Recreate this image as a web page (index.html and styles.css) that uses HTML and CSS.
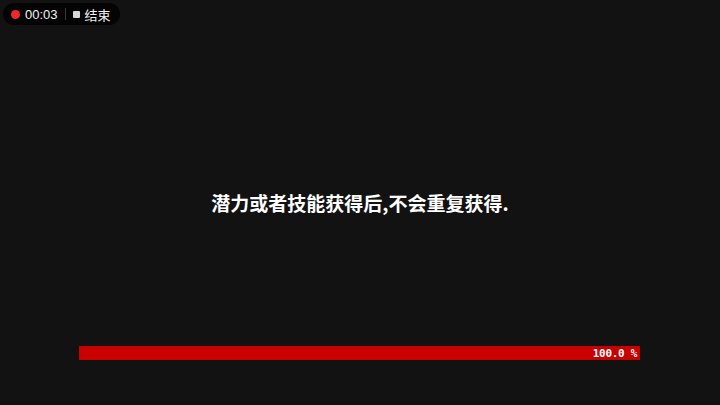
FILE: index.html
```html
<!DOCTYPE html>
<html lang="zh">
<head>
<meta charset="utf-8">
<link rel="stylesheet" href="styles.css">
</head>
<body>
<div class="screen">
  <div class="rec">
    <span class="dot"></span>
    <span class="time">00:03</span>
    <span class="sep"></span>
    <span class="stop"></span>
    <span class="end">结束</span>
  </div>
  <div class="message">潜力或者技能获得后,不会重复获得.</div>
  <div class="progress">
    <div class="fill" style="width:100%"><span class="pct">100.0 %</span></div>
  </div>
</div>
</body>
</html>
```
FILE: styles.css
```css
html, body {
  margin: 0;
  padding: 0;
  background: #121212;
}
.screen {
  position: relative;
  width: 720px;
  height: 405px;
  background: #121212;
  overflow: hidden;
  font-family: "Liberation Sans", "Noto Sans CJK SC", sans-serif;
}
.rec {
  position: absolute;
  left: 3px;
  top: 3px;
  height: 22px;
  padding: 0 9px 0 8px;
  display: flex;
  align-items: center;
  background: #040404;
  border-radius: 11px;
  color: #f2f2f2;
  font-size: 13px;
}
.dot {
  width: 9px;
  height: 9px;
  border-radius: 50%;
  background: #f0282c;
  margin-right: 5px;
}
.sep {
  width: 1px;
  height: 12px;
  background: #3a3a3a;
  margin: 0 7px 0 7px;
}
.stop {
  width: 7px;
  height: 7px;
  background: #d8d8d8;
  border-radius: 1px;
  margin-right: 5px;
}
.end {
  font-family: "Noto Sans CJK SC", sans-serif;
}
.message {
  position: absolute;
  left: 0;
  right: 0;
  top: 190px;
  text-align: center;
  color: #ffffff;
  font-family: "Noto Sans CJK SC", sans-serif;
  font-weight: 700;
  font-size: 19px;
  line-height: 26px;
}
.progress {
  position: absolute;
  left: 79px;
  top: 346px;
  width: 561px;
  height: 14px;
}
.fill {
  height: 100%;
  background: #c80000;
  display: flex;
  align-items: center;
  justify-content: flex-end;
}
.pct {
  color: #ffffff;
  font-family: "DejaVu Sans Mono", monospace;
  font-weight: 700;
  font-size: 11px;
  padding-right: 3px;
  letter-spacing: -0.3px;
}
```
